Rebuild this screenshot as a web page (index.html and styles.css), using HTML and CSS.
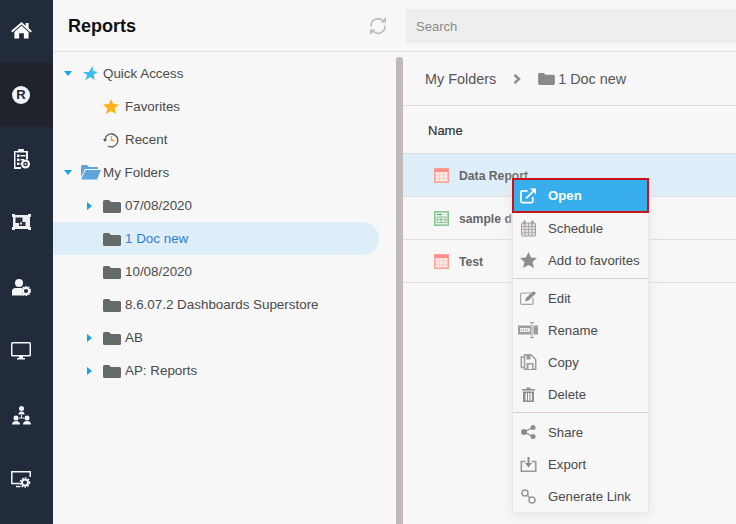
FILE: index.html
```html
<!DOCTYPE html>
<html>
<head>
<meta charset="utf-8"/>
<link rel="stylesheet" href="styles.css">
<title>Reports</title>
</head>
<body>
<svg class="defs" width="0" height="0">
  <defs>
    <path id="folder" d="M0 2.500Q0 1 1.500 1H6L8 3H16.500Q18 3 18 4.500V12.500Q18 14 16.500 14H1.500Q0 14 0 12.500Z"/>
    <g id="report-grid">
      <rect x=".8" y=".8" width="13.400" height="13.400" fill="#fbe9e2" stroke="#fb9e96" stroke-width="1.500"/>
      <rect x="1" y="1" width="13" height="3" fill="#fb8c86"/>
      <path d="M1.500 7H13.500M1.500 10.500H13.500M5.500 4V14M9.500 4V14" stroke="#f7cfc6" fill="none"/>
    </g>
  </defs>
</svg>

<div class="app">
  <nav class="rail">
    <div class="rail-item">
      <svg class="nudge-up" width="21" height="17" viewBox="0 0 22 18"><path fill="#fff" d="M11 0 0 9.500 1.300 11 11 2.600 20.700 11 22 9.500 18.500 6.500V1H15.500V3.900ZM11 4 3.500 10.500V17.500H8.500V12H13.500V17.500H18.500V10.500Z"/></svg>
    </div>
    <div class="rail-item active">
      <span class="r-badge">R</span>
    </div>
    <div class="rail-item">
      <svg width="17" height="20" viewBox="0 0 17 20"><path fill="#f4f6f8" d="M1 2H5V1Q5 0 6 0H10Q11 0 11 1V2H15V10.500H13V3.500H2.500V18H8V20H1Z"/><path fill="#f4f6f8" d="M4 5.500H6.500V8H4ZM7.500 6H12.500V7.500H7.500ZM4 9.500H6.500V12H4ZM7.500 10H11V11.500H7.500ZM4 13.500H6.500V16H4ZM7.500 14H9V15.500H7.500Z"/><circle cx="12.500" cy="15" r="4.500" fill="#f4f6f8"/><circle cx="12.500" cy="15" r="2.300" fill="#212b3b"/><circle cx="12.500" cy="15" r="1" fill="#f4f6f8"/></svg>
    </div>
    <div class="rail-item">
      <svg class="nudge-up" width="19" height="16" viewBox="0 0 19 16"><path fill="#f0f0f2" d="M0 0H3V1H16V0H19V3H18V13H19V16H16V15H3V16H0V13H1V3H0Z"/><path fill="#2a3040" d="M3.500 3.500H10.500V8H13.500V12H7V9H3.500Z"/><path fill="#f0f0f2" d="M8 8.500H10V10.500H8Z"/></svg>
    </div>
    <div class="rail-item">
      <svg width="19" height="17" viewBox="0 0 19 17"><circle cx="7" cy="4" r="4" fill="#f4f6f8"/><path fill="#f4f6f8" d="M0 16.500V12.500Q0 9 3.500 9H10.500Q9.500 11 10 13Q10.500 15.500 12 16.500Z"/><circle cx="14" cy="12" r="3.200" fill="none" stroke="#f4f6f8" stroke-width="2.200"/><circle cx="14" cy="12" r="4.600" fill="none" stroke="#f4f6f8" stroke-width="1.200" stroke-dasharray="1.500 1.400"/></svg>
    </div>
    <div class="rail-item">
      <svg width="20" height="18" viewBox="0 0 20 18"><path fill="#f4f6f8" d="M1.500 0H18.500Q20 0 20 1.500V13Q20 14.500 18.500 14.500H12V16H14V17.500H6V16H8V14.500H1.500Q0 14.500 0 13V1.500Q0 0 1.500 0ZM1.500 1.500V13H18.500V1.500Z"/></svg>
    </div>
    <div class="rail-item">
      <svg width="19" height="19" viewBox="0 0 19 19"><circle cx="9.500" cy="2.500" r="2.500" fill="#f4f6f8"/><path fill="#f4f6f8" d="M6.500 8.500Q6.500 5.500 9.500 5.500T12.500 8.500Z"/><circle cx="4" cy="12" r="2.500" fill="#f4f6f8"/><path fill="#f4f6f8" d="M0 18.500Q0 15 4 15T8 18.500Z"/><circle cx="15" cy="12" r="2.500" fill="#f4f6f8"/><path fill="#f4f6f8" d="M11 18.500Q11 15 15 15T19 18.500Z"/><path d="M9.500 9V11.500M7 12H12" stroke="#f4f6f8"/></svg>
    </div>
    <div class="rail-item">
      <svg width="20" height="17" viewBox="0 0 20 17"><path fill="none" stroke="#f4f6f8" stroke-width="1.500" d="M9 12.500H.8V.8H19.200V6"/><path d="M5 15.500H9.500" stroke="#f4f6f8" stroke-width="1.500"/><circle cx="14" cy="11.500" r="3" fill="none" stroke="#f4f6f8" stroke-width="2"/><circle cx="14" cy="11.500" r="4.600" fill="none" stroke="#f4f6f8" stroke-width="1.500" stroke-dasharray="1.600 1.400"/></svg>
    </div>
  </nav>

  <div class="main">
    <header class="topbar">
      <div class="topbar-left">
        <h1 class="page-title">Reports</h1>
        <svg class="refresh" width="18" height="18" viewBox="0 0 18 18"><path fill="none" stroke="#bcbcbc" stroke-width="1.600" d="M2 9.500A7 7 0 0 1 14.500 4.500M16 8.500A7 7 0 0 1 3.500 13.500"/><path fill="#bcbcbc" d="M11.500 5.500H17V0ZM6.500 12.500H1V18Z"/></svg>
      </div>
      <div class="search">Search</div>
    </header>

    <div class="content">
      <aside class="tree">
        <div class="tree-row">
          <span class="caret-down"></span>
          <span class="tree-icon star-shift"><svg width="15" height="15" viewBox="0 0 15 15"><path fill="#3cbcec" d="M9.500 0 10 5 15 6 10.800 8.600 11.500 14 7.500 11 2 14.500 4.300 9.200 0 6H5.800Z"/></svg></span>
          <span>Quick Access</span>
        </div>
        <div class="tree-row sub">
          <span class="caret-none"></span>
          <span class="tree-icon"><svg width="16" height="15" viewBox="0 0 16 15"><path fill="#fbb117" d="M8 0 10.200 5 16 5.600 11.600 9.400 13 15 8 12 3 15 4.400 9.400 0 5.600 5.800 5Z"/></svg></span>
          <span>Favorites</span>
        </div>
        <div class="tree-row sub">
          <span class="caret-none"></span>
          <span class="tree-icon"><svg width="16" height="16" viewBox="0 0 16 16"><path fill="none" stroke="#555" stroke-width="1.300" d="M1.800 8.500A6.500 6.500 0 1 1 5 14"/><path fill="#555" d="M0 7H4L2 10Z"/><path fill="none" stroke="#f5a623" stroke-width="1.400" d="M8.500 4V8.500H11.500"/></svg></span>
          <span>Recent</span>
        </div>
        <div class="tree-row">
          <span class="caret-down"></span>
          <span class="tree-icon"><svg width="20" height="15" viewBox="0 0 20 15"><path fill="#5da5dd" d="M0 1.500Q0 0 1.500 0H6L8 2H16Q17 2 17 3V4H4L0 12Z"/><path fill="#5da5dd" d="M4.800 5H20L16 14.500H0Z"/></svg></span>
          <span>My Folders</span>
        </div>
        <div class="tree-row sub">
          <span class="caret-right"></span>
          <span class="tree-icon"><svg class="folder-icon" width="18" height="14" viewBox="0 0 18 14"><use href="#folder"/></svg></span>
          <span>07/08/2020</span>
        </div>
        <div class="tree-row sub selected">
          <span class="caret-none"></span>
          <span class="tree-icon"><svg class="folder-icon" width="18" height="14" viewBox="0 0 18 14"><use href="#folder"/></svg></span>
          <span>1 Doc new</span>
        </div>
        <div class="tree-row sub">
          <span class="caret-none"></span>
          <span class="tree-icon"><svg class="folder-icon" width="18" height="14" viewBox="0 0 18 14"><use href="#folder"/></svg></span>
          <span>10/08/2020</span>
        </div>
        <div class="tree-row sub">
          <span class="caret-none"></span>
          <span class="tree-icon"><svg class="folder-icon" width="18" height="14" viewBox="0 0 18 14"><use href="#folder"/></svg></span>
          <span>8.6.07.2 Dashboards Superstore</span>
        </div>
        <div class="tree-row sub">
          <span class="caret-right"></span>
          <span class="tree-icon"><svg class="folder-icon" width="18" height="14" viewBox="0 0 18 14"><use href="#folder"/></svg></span>
          <span>AB</span>
        </div>
        <div class="tree-row sub">
          <span class="caret-right"></span>
          <span class="tree-icon"><svg class="folder-icon" width="18" height="14" viewBox="0 0 18 14"><use href="#folder"/></svg></span>
          <span>AP: Reports</span>
        </div>
      </aside>

      <div class="splitter"></div>

      <section class="listing">
        <div class="crumbs">
          <span>My Folders</span>
          <svg class="crumb-sep" width="8" height="10" viewBox="0 0 8 10"><path fill="none" stroke="#8a8a8a" stroke-width="2.400" d="M1.500 .8 6 5 1.500 9.200"/></svg>
          <svg class="crumb-folder" width="17" height="13" viewBox="0 0 18 14"><use href="#folder"/></svg>
          <span>1 Doc new</span>
        </div>
        <div class="col-head">Name</div>
        <div class="file-row selected">
          <svg width="15" height="15" viewBox="0 0 15 15"><use href="#report-grid"/></svg>
          <span>Data Report</span>
        </div>
        <div class="file-row">
          <svg width="15" height="15" viewBox="0 0 15 15"><rect x=".8" y=".8" width="13.400" height="13.400" fill="#e8f3e8" stroke="#86c48e" stroke-width="1.500"/><path d="M3 3.500H8" stroke="#5dab68" stroke-width="1.200"/><path d="M3 6H12V11.500H3ZM7 6V11.500M3 8.700H12" stroke="#8cc694" fill="none"/></svg>
          <span>sample d</span>
        </div>
        <div class="file-row">
          <svg width="15" height="15" viewBox="0 0 15 15"><use href="#report-grid"/></svg>
          <span>Test</span>
        </div>
      </section>
    </div>
  </div>
</div>

<div class="menu">
  <div class="menu-item open">
    <svg width="18" height="18" viewBox="0 0 18 18"><path fill="none" stroke="#fff" stroke-width="1.800" d="M8 3.500H2.500Q1 3.500 1 5V14.500Q1 16 2.500 16H12Q13.500 16 13.500 14.500V10"/><path fill="none" stroke="#fff" stroke-width="2" d="M6.500 11.500 15 3"/><path fill="#fff" d="M10.500 1H17V7.500Z"/></svg>
    <span>Open</span>
  </div>
  <div class="menu-item">
    <svg width="17" height="17" viewBox="0 0 17 17"><rect x="1.500" y="3" width="14" height="13" rx="1" fill="#e6e1e1" stroke="#a19c9c"/><path fill="none" stroke="#b0abab" d="M1.500 6.500H15.500M1.500 9.500H15.500M1.500 12.800H15.500M5 3V16M8.500 3V16M12 3V16"/><path fill="#9a9595" d="M3.500 .5H5.500V4.500H3.500ZM11.500 .5H13.500V4.500H11.500Z"/></svg>
    <span>Schedule</span>
  </div>
  <div class="menu-item">
    <svg width="17" height="16" viewBox="0 0 17 16"><path fill="#8d8d8d" d="M8.500 0 11 5.500 17 6 12.500 10 14 16 8.500 13 3 16 4.500 10 0 6 6 5.500Z"/></svg>
    <span>Add to favorites</span>
  </div>
  <div class="menu-sep"></div>
  <div class="menu-item">
    <svg width="17" height="14" viewBox="0 0 17 14"><path fill="none" stroke="#a3a3a3" stroke-width="1.200" d="M11 2H2Q.6 2 .6 3.400V12Q.6 13.400 2 13.400H11.500Q13 13.400 13 12V7"/><path fill="#8d8d8d" d="M13.500 0 16 2.200 8.500 9.500 5 10.500 6 7Z"/></svg>
    <span>Edit</span>
  </div>
  <div class="menu-item">
    <svg class="wide" width="20" height="16" viewBox="0 0 20 16"><path fill="#a09c9c" d="M0 3.500H13V12.500H0ZM15.500 3.500H20V12.500H15.500Z"/><path fill="#ece8e8" d="M2 6H12V10H2Z"/><path d="M3 8H11" stroke="#8d8d8d" stroke-dasharray="1 1"/><path d="M12 .5H16M14 .5V15.500M12 15.500H16" stroke="#a09c9c" fill="none"/></svg>
    <span>Rename</span>
  </div>
  <div class="menu-item">
    <svg width="16" height="16" viewBox="0 0 16 16"><path fill="none" stroke="#a09c9c" stroke-width="1.500" d="M4 .8H10.500L15.200 5.500V15.200H4ZM4 3H.8V13.500H4"/><path fill="#a09c9c" d="M6 .8H10V5.500H6ZM6 9H13V15H6Z"/><path fill="#f7f7f7" d="M8 10.500H11.500V15H8Z"/></svg>
    <span>Copy</span>
  </div>
  <div class="menu-item">
    <svg width="13" height="15" viewBox="0 0 13 15"><path fill="#8d8d8d" fill-rule="evenodd" d="M0 2H4.500V.5H8.500V2H13V3.500H0ZM1 4.500H12V15H1ZM3.500 6V13.500H5V6ZM6 6V13.500H7.500V6ZM8.500 6V13.500H10V6Z"/></svg>
    <span>Delete</span>
  </div>
  <div class="menu-sep"></div>
  <div class="menu-item">
    <svg width="15" height="14" viewBox="0 0 15 14"><circle cx="3" cy="7" r="3" fill="#8d8d8d"/><circle cx="12" cy="2.500" r="2.500" fill="#8d8d8d"/><circle cx="12" cy="11.500" r="2.500" fill="#8d8d8d"/><path d="M3 7 12 2.500M3 7 12 11.500" stroke="#8d8d8d" stroke-width="1.300"/></svg>
    <span>Share</span>
  </div>
  <div class="menu-item">
    <svg width="16" height="15" viewBox="0 0 16 15"><path fill="none" stroke="#9a9a9a" stroke-width="1.600" d="M5 4.500H.8V14.200H15.200V4.500H11"/><path fill="#8d8d8d" d="M7 0H9V6H11.500L8 10.500 4.500 6H7Z"/></svg>
    <span>Export</span>
  </div>
  <div class="menu-item">
    <svg width="15" height="15" viewBox="0 0 15 15"><circle cx="4" cy="4" r="3" fill="none" stroke="#9a9a9a" stroke-width="1.600"/><circle cx="11" cy="11" r="3" fill="none" stroke="#9a9a9a" stroke-width="1.600"/><path d="M6 6 9 9" stroke="#9a9a9a" stroke-width="1.600"/></svg>
    <span>Generate Link</span>
  </div>
</div>
</body>
</html>
```

FILE: styles.css
```css
html, body {
  margin: 0;
  height: 100%;
  overflow: hidden;
}

body {
  background-color: #f7f7f7;
  color: #4a4a4a;
  font-family: "Liberation Sans", Arial, sans-serif;
  font-size: 13.400px;
}

.defs {
  display: block;
  height: 0;
}

.app {
  display: flex;
  height: 524px;
}

/* left icon rail */
.rail {
  width: 53px;
  flex: none;
  background-color: #212b3b;
}

.rail-item {
  height: 64px;
  padding-right: 11px;
  box-sizing: border-box;
  display: flex;
  align-items: center;
  justify-content: center;
}

.rail-item:first-child {
  height: 63px;
}

.rail-item.active {
  background-color: #21232c;
}

.nudge-up {
  margin-bottom: 2px;
}

.r-badge {
  width: 18px;
  height: 18px;
  border-radius: 50%;
  background-color: #eef6fb;
  color: #21232c;
  font-size: 13px;
  font-weight: bold;
  line-height: 18px;
  text-align: center;
}

.main {
  flex: 1;
  display: flex;
  flex-direction: column;
  min-width: 0;
}

.topbar {
  height: 51px;
  flex: none;
  display: flex;
  align-items: center;
  border-bottom: 1px solid #dedede;
}

.topbar-left {
  width: 353px;
  flex: none;
  display: flex;
  align-items: center;
  justify-content: space-between;
  padding: 0 19px 0 15px;
  box-sizing: border-box;
}

.page-title {
  margin: 2px 0 0;
  color: #111;
  font-size: 18px;
  font-weight: bold;
}

.search {
  flex: 1;
  height: 34px;
  margin-top: 1px;
  padding-left: 10px;
  background-color: #eeeeee;
  color: #8a8a8a;
  font-size: 13px;
  line-height: 36px;
}

.content {
  flex: 1;
  display: flex;
  min-height: 0;
}

/* folder tree */
.tree {
  width: 343px;
  flex: none;
  padding-top: 5px;
  box-sizing: border-box;
}

.tree-row {
  height: 33px;
  margin-right: 17px;
  padding-left: 11px;
  display: flex;
  align-items: center;
  color: #4a4a4a;
}

.tree-row.sub {
  padding-left: 34px;
}

.tree-row.selected {
  background-color: #deeef8;
  border-radius: 0 17px 17px 0;
  color: #2a7fce;
}

.caret-down, .caret-none, .caret-right {
  flex: none;
  width: 17px;
  box-sizing: border-box;
}

.sub .caret-none, .sub .caret-right {
  width: 16px;
}

.caret-down::before {
  content: "";
  display: block;
  width: 0;
  border-left: 4px solid transparent;
  border-right: 4px solid transparent;
  border-top: 5px solid #12a5ea;
}

.caret-right::before {
  content: "";
  display: block;
  width: 0;
  border-top: 4px solid transparent;
  border-bottom: 4px solid transparent;
  border-left: 5px solid #12a5ea;
}

.tree-icon {
  flex: none;
  width: 20px;
  margin-right: 2px;
  display: flex;
  justify-content: center;
}

.tree-icon.star-shift {
  justify-content: flex-start;
  padding-left: 2px;
  width: 18px;
}

.sub .tree-icon {
  width: 18px;
  margin-right: 4px;
  justify-content: flex-start;
}

.folder-icon {
  fill: #646a69;
}

.splitter {
  width: 7px;
  flex: none;
  margin-top: 5px;
  background-color: #c2bab8;
  border-radius: 3px 3px 0 0;
}

/* report list */
.listing {
  flex: 1;
  min-width: 0;
}

.crumbs {
  height: 53px;
  padding-left: 22px;
  display: flex;
  align-items: center;
  border-bottom: 1px solid #dedede;
  font-size: 14.400px;
  color: #555;
}

.crumb-sep {
  margin: 0 17px;
}

.crumb-folder {
  margin-right: 3px;
  fill: #8a8a8a;
}

.col-head {
  height: 47px;
  padding-left: 25px;
  font-size: 13px;
  line-height: 49px;
  border-bottom: 1px solid #dedede;
  color: #333;
  -webkit-text-stroke: .2px #333;
}

.file-row {
  height: 42px;
  padding-left: 31px;
  display: flex;
  align-items: center;
  gap: 10px;
  border-bottom: 1px solid #dedede;
  font-size: 12.200px;
  font-weight: bold;
  color: #666;
}

.file-row span {
  margin-top: 2px;
}

.file-row.selected {
  background-color: #deeef8;
}

/* context menu */
.menu {
  position: absolute;
  left: 512px;
  top: 178px;
  width: 137px;
  box-sizing: border-box;
  background-color: #f7f7f7;
  border: 1px solid #ebe7e7;
  box-shadow: 0 2px 10px rgba(230, 230, 230, .95);
  font-size: 13.200px;
}

.menu-item {
  height: 32px;
  display: flex;
  align-items: center;
  padding-left: 7px;
  color: #4a4a4a;
}

.menu-item svg {
  width: 17px;
  margin-right: 11px;
  flex: none;
}

.menu-item svg.wide {
  width: 20px;
  margin-left: -2px;
  margin-right: 10px;
}

.menu-item.open {
  height: 35px;
  margin: -1px -1px 0 -1px;
  padding-left: 6px;
  box-sizing: border-box;
  background-color: #38aeec;
  border: 2px solid #c9141c;
  color: #fff;
  font-weight: bold;
}

.menu-item.open + .menu-item {
  margin-top: -1px;
}

.menu-sep {
  height: 1px;
  margin: 2px 0 3px;
  background-color: #dccfd0;
}
```
